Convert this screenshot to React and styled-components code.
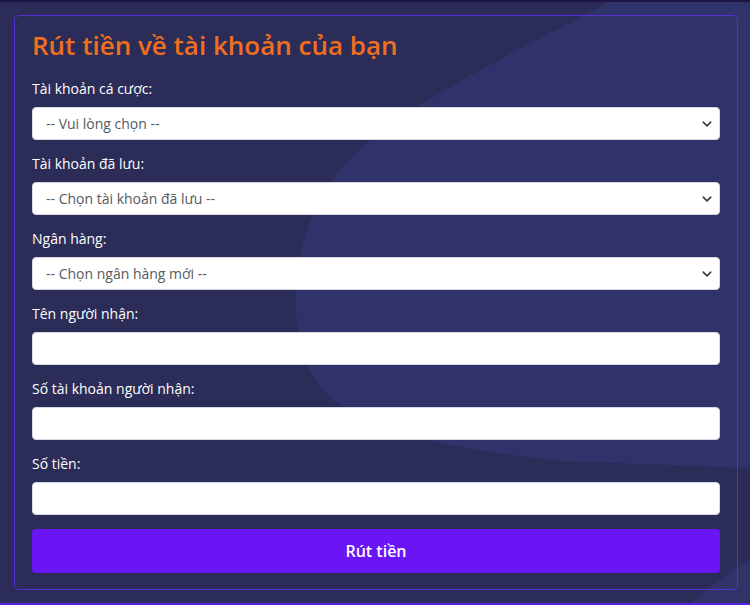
import styled, { createGlobalStyle } from 'styled-components';

const GlobalStyle = createGlobalStyle`
  * { box-sizing: border-box; }
  html, body {
    margin: 0;
    padding: 0;
    background: #2b2c57;
    font-family: 'Open Sans', 'Noto Sans', sans-serif;
  }
`;

const fields = [
  { label: 'Tài khoản cá cược:', kind: 'select', placeholder: '-- Vui lòng chọn --' },
  { label: 'Tài khoản đã lưu:', kind: 'select', placeholder: '-- Chọn tài khoản đã lưu --' },
  { label: 'Ngân hàng:', kind: 'select', placeholder: '-- Chọn ngân hàng mới --' },
  { label: 'Tên người nhận:', kind: 'input' },
  { label: 'Số tài khoản người nhận:', kind: 'input' },
  { label: 'Số tiền:', kind: 'input' },
];

function Chevron() {
  return (
    <svg width="12" height="12" viewBox="0 0 16 16" fill="none">
      <path d="M3 5.5l5 5 5-5" stroke="#343a40" strokeWidth="2" strokeLinecap="round" strokeLinejoin="round" />
    </svg>
  );
}

export default function App() {
  return (
    <Page>
      <GlobalStyle />
      <Backdrop viewBox="0 0 750 601" preserveAspectRatio="none">
        <path d="M612 -2 C540 40 385 105 332 178 C288 240 285 338 318 382 C355 428 430 444 560 459 L750 466 L750 -2 Z" fill="#30326a" />
        <path d="M690 601 C715 580 735 565 750 558 L750 601 Z" fill="#303268" />
      </Backdrop>
      <Card>
        <Title>Rút tiền về tài khoản của bạn</Title>
        <Form onSubmit={(e) => e.preventDefault()}>
          {fields.map((f) => (
            <Group key={f.label}>
              <Label>{f.label}</Label>
              {f.kind === 'select' ? (
                <SelectWrap>
                  <Select defaultValue="">
                    <option value="">{f.placeholder}</option>
                  </Select>
                  <Caret><Chevron /></Caret>
                </SelectWrap>
              ) : (
                <Input type="text" />
              )}
            </Group>
          ))}
          <Submit type="submit">Rút tiền</Submit>
        </Form>
      </Card>
    </Page>
  );
}

const Page = styled.div`
  position: relative;
  height: 605px;
  overflow: hidden;
  background: #2b2c57;
  border-top: 2px solid #1b1444;
  border-bottom: 2px solid #5a1fe6;
  padding: 13px 12px 0 14px;
`;

const Backdrop = styled.svg`
  position: absolute;
  inset: 0;
  width: 100%;
  height: 100%;
  z-index: 0;
`;

const Card = styled.div`
  position: relative;
  z-index: 1;
  height: 575px;
  border: 1px solid #5430d6;
  border-radius: 5px;
  padding: 14px 17px 15px 17px;
`;

const Title = styled.h1`
  margin: 0 0 18px;
  font-size: 26px;
  line-height: 31px;
  font-weight: 600;
  color: #ef6f1e;
`;

const Form = styled.form`
  display: flex;
  flex-direction: column;
  gap: 14px;
`;

const Group = styled.div`
  display: flex;
  flex-direction: column;
  gap: 8px;
`;

const Label = styled.label`
  font-size: 14px;
  line-height: 20px;
  color: #ffffff;
`;

const fieldBase = `
  width: 100%;
  height: 33px;
  border: 1px solid #d5d8e2;
  border-radius: 4px;
  background: #ffffff;
  font-family: 'Open Sans', 'Noto Sans', sans-serif;
  font-size: 14px;
  color: #555a60;
  padding: 0 13px;
  outline: none;
`;

const SelectWrap = styled.div`
  position: relative;
`;

const Select = styled.select`
  ${fieldBase}
  appearance: none;
  -webkit-appearance: none;
`;

const Caret = styled.span`
  position: absolute;
  right: 7px;
  top: 50%;
  transform: translateY(-50%);
  display: flex;
  pointer-events: none;
`;

const Input = styled.input`
  ${fieldBase}
`;

const Submit = styled.button`
  height: 44px;
  border: none;
  border-radius: 4px;
  background: #6915f5;
  color: #ffffff;
  font-family: 'Open Sans', 'Noto Sans', sans-serif;
  font-size: 16px;
  font-weight: 600;
  cursor: pointer;
`;
